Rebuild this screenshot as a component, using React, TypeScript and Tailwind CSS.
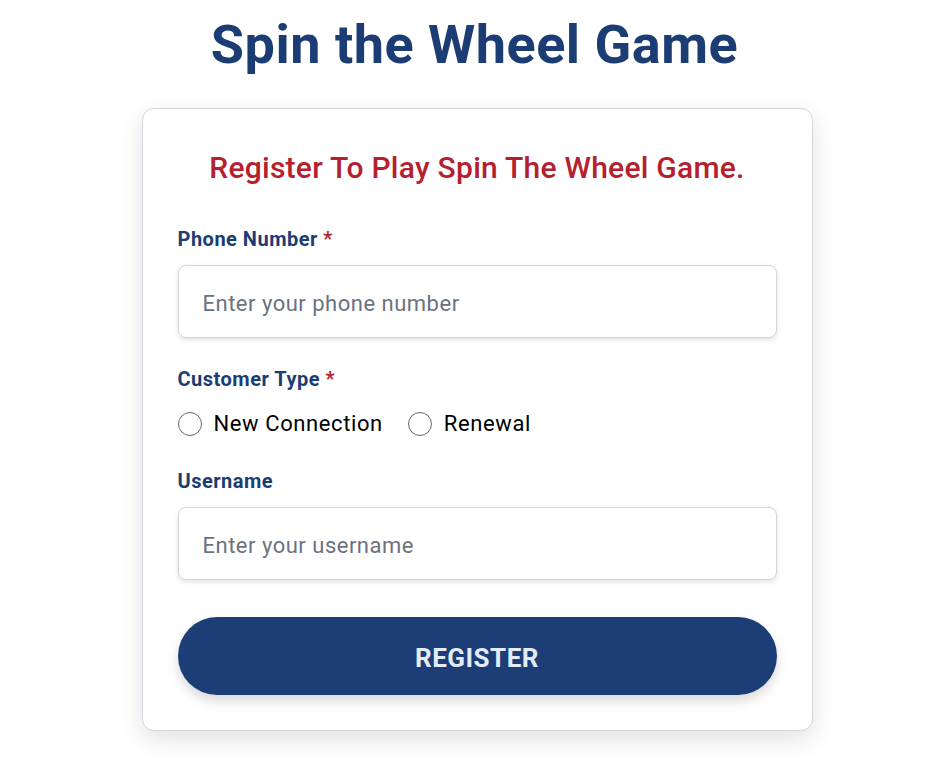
import React, { useState } from 'react';

const App: React.FC = () => {
  const [phone, setPhone] = useState('');
  const [username, setUsername] = useState('');
  const [customerType, setCustomerType] = useState('');

  return (
    <div className="min-h-screen bg-white flex flex-col items-center font-['Roboto',sans-serif]">
      <h1 className="mt-[10px] text-[54px] leading-[70px] font-bold tracking-[0.5px] text-[#1c3d73]">Spin the Wheel Game</h1>

      <div className="mt-[28px] ml-[5px] w-[671px] bg-white border border-gray-300 rounded-xl shadow-[0_8px_24px_rgba(0,0,0,0.12)] px-[35px] pt-[37px] pb-[35px]">
        <h2 className="text-center text-[30px] leading-[44px] font-medium tracking-[0.25px] text-[#b5202e]">Register To Play Spin The Wheel Game.</h2>

        <div className="mt-[36px]">
          <label className="block text-[20px] leading-[26px] font-bold tracking-[0.5px] text-[#1c3d73]">
            Phone Number <span className="text-[#b5202e]">*</span>
          </label>
          <input
            type="tel"
            value={phone}
            onChange={e => setPhone(e.target.value)}
            placeholder="Enter your phone number"
            className="mt-[13px] w-full h-[73px] px-[24px] pt-[4px] rounded-lg border border-gray-300 shadow-[0_2px_5px_rgba(0,0,0,0.12)] text-[22px] tracking-[0.5px] text-gray-900 placeholder:text-[#6b7280] outline-none"
          />
        </div>

        <div className="mt-[28px]">
          <label className="block text-[20px] leading-[26px] font-bold tracking-[0.5px] text-[#1c3d73]">
            Customer Type <span className="text-[#b5202e]">*</span>
          </label>
          <div className="mt-[19px] flex items-center gap-[25px]">
            {['New Connection', 'Renewal'].map(t => (
              <label key={t} className="flex items-center gap-[12px] cursor-pointer">
                <span className="w-[24px] h-[24px] rounded-full border border-[#666] bg-white flex items-center justify-center">
                  {customerType === t && <span className="w-[12px] h-[12px] rounded-full bg-[#1c3d73]" />}
                </span>
                <input type="radio" name="ctype" className="hidden" checked={customerType === t} onChange={() => setCustomerType(t)} />
                <span className="text-[22px] leading-[26px] tracking-[0.6px] text-black">{t}</span>
              </label>
            ))}
          </div>
        </div>

        <div className="mt-[31px]">
          <label className="block text-[20px] leading-[26px] font-bold tracking-[0.5px] text-[#1c3d73]">Username</label>
          <input
            type="text"
            value={username}
            onChange={e => setUsername(e.target.value)}
            placeholder="Enter your username"
            className="mt-[13px] w-full h-[73px] px-[24px] pt-[4px] rounded-lg border border-gray-300 shadow-[0_2px_5px_rgba(0,0,0,0.12)] text-[22px] tracking-[0.5px] text-gray-900 placeholder:text-[#6b7280] outline-none"
          />
        </div>

        <button className="mt-[37px] w-full h-[78px] pt-[4px] rounded-full bg-[#1c3d75] text-[#e3ecf6] text-[26px] font-bold tracking-[0.5px] shadow-[0_6px_12px_rgba(0,0,0,0.15)]">
          REGISTER
        </button>
      </div>
    </div>
  );
};

export default App;
